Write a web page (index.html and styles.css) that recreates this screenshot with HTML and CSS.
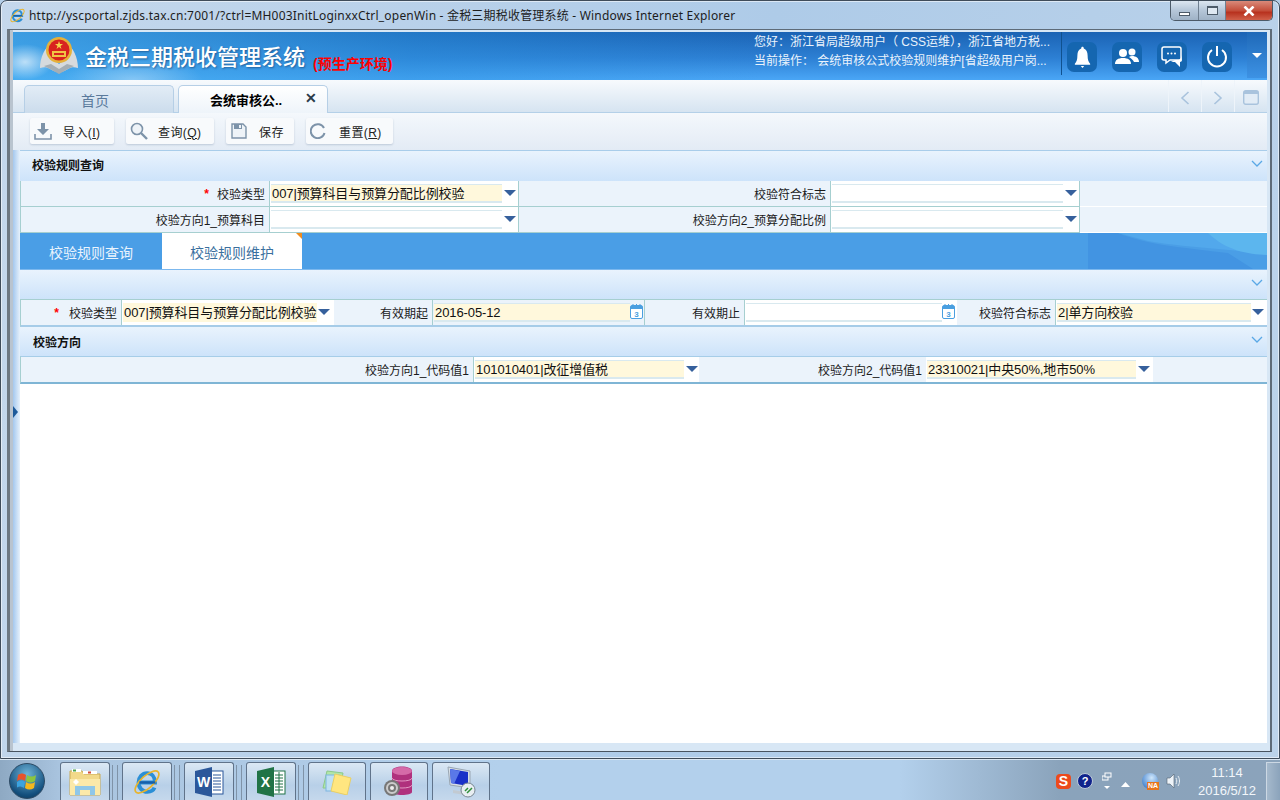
FILE: index.html
```html
<!DOCTYPE html>
<html lang="zh">
<head>
<meta charset="utf-8">
<title>金税三期税收管理系统</title>
<link rel="stylesheet" href="styles.css">
</head>
<body>
<svg class="defs" width="0" height="0">
  <symbol id="ie" viewBox="0 0 32 32">
    <path d="M7.500 16.500h17c0-6-3.500-10-8.500-10s-9 4.500-9 10 4 10 9.500 10c4 0 6.500-2 7.500-4.500" fill="none" stroke="#2b8fd6" stroke-width="4.200"/>
    <ellipse cx="16" cy="16" rx="16" ry="6.500" transform="rotate(-42 16 16)" fill="none" stroke="#e8b42c" stroke-width="1.800"/>
    <path d="M8 16.500h17" stroke="#175fa8" stroke-width="2.500"/>
  </symbol>
  <symbol id="arrow" viewBox="0 0 12 6">
    <path d="M0 0h12L6 6z" fill="#36609c"/>
  </symbol>
  <symbol id="chev" viewBox="0 0 12 7">
    <path d="M1 1l5 5 5-5" fill="none" stroke="#5aa8e6" stroke-width="1.300"/>
  </symbol>
</svg>

<div class="desktop">
  <div class="window">
    <div class="titlebar">
      <svg class="title-ie"><use href="#ie"/></svg>
      <span class="title-text">http://yscportal.zjds.tax.cn:7001/?ctrl=MH003InitLoginxxCtrl_openWin - 金税三期税收管理系统 - Windows Internet Explorer</span>
      <div class="win-ctrls">
        <div class="wc wc-min"><i></i></div>
        <div class="wc wc-max"><i></i></div>
        <div class="wc wc-close"><svg width="12" height="10" viewBox="0 0 12 10"><path d="M1.500 .5l9 9M10.500 .5l-9 9" stroke="#fff" stroke-width="2.600"/></svg></div>
      </div>
    </div>

    <div class="frame">
      <header class="app-head">
        <svg class="emblem" width="38" height="40" viewBox="0 0 38 40">
          <path d="M12 8C5 10 0 22 0 32c4-1 7-1 10 1 3 2 6 3 9 3s6-1 9-3c3-2 6-2 10-1 0-10-5-22-12-24 2 8 1 15-7 20-7-5-9-12-7-20z" fill="#d6dadd"/>
          <path d="M4 30l7-2 8 5 8-5 7 2-6 3-9 5-9-5z" fill="#a5aeb4"/>
          <circle cx="19" cy="14" r="13" fill="#e6b13a"/>
          <circle cx="19" cy="14" r="10.500" fill="#d8231f"/>
          <path d="M19 5l1 3h3l-2.500 2 1 3-2.500-2-2.500 2 1-3L15 8h3z" fill="#f5d44a"/>
          <rect x="12" y="15" width="14" height="6" fill="#f0c544"/>
          <rect x="14" y="17" width="10" height="2" fill="#d8231f"/>
        </svg>
        <div class="app-title">金税三期税收管理系统</div>
        <div class="app-env">(预生产环境)</div>
        <div class="user-info">
          <div>您好：浙江省局超级用户（ CSS运维），浙江省地方税...</div>
          <div>当前操作： 会统审核公式校验规则维护[省超级用户岗...</div>
        </div>
        <div class="head-btns">
          <div class="hbtn"><svg width="17" height="24" viewBox="0 0 20 26"><path d="M10 1c1 0 1.500.7 1.500 2 3 1 4.500 4 4.500 8 0 5 1 8 3 10v1H1v-1c2-2 3-5 3-10 0-4 1.500-7 4.500-8C8.500 1.700 9 1 10 1z" fill="#fff"/><path d="M8 23.500h4L10 26z" fill="#fff"/></svg></div>
          <div class="hbtn"><svg width="24" height="18" viewBox="0 0 24 18"><circle cx="8" cy="5" r="4" fill="#fff"/><path d="M0 16c0-4 3-6 8-6s8 2 8 6z" fill="#fff"/><circle cx="17" cy="4" r="3.500" fill="#fff"/><path d="M14 9c1-.5 2-1 3-1 4 0 7 2 7 6h-5c-1-2-3-4-5-5z" fill="#fff"/></svg></div>
          <div class="hbtn"><svg width="22" height="22" viewBox="0 0 22 22"><path d="M3 1h15a2 2 0 0 1 2 2v9a2 2 0 0 1-2 2H9l-4 3v-3H3a2 2 0 0 1-2-2V3a2 2 0 0 1 2-2z" fill="none" stroke="#fff" stroke-width="1.500"/><circle cx="7" cy="7.500" r="1" fill="#fff"/><circle cx="10.500" cy="7.500" r="1" fill="#fff"/><circle cx="14" cy="7.500" r="1" fill="#fff"/><path d="M21 9v5c0 1-1 2-2 2v5l-5-5H10l4-2h6z" fill="#fff"/></svg></div>
          <div class="hbtn"><svg width="22" height="22" viewBox="0 0 22 22"><path d="M6 4a9 9 0 1 0 10 0" fill="none" stroke="#fff" stroke-width="2"/><path d="M11 0v10" stroke="#fff" stroke-width="2"/></svg></div>
        </div>
        <div class="head-more"><svg width="10" height="5" viewBox="0 0 10 5"><path d="M0 0h10L5 5z" fill="#fff"/></svg></div>
      </header>

      <div class="app-body">
        <aside class="side-strip"><i class="side-tri"></i></aside>
        <main class="app-main">
          <div class="tabs-row">
            <div class="page-tab">首页</div>
            <div class="page-tab page-tab-on"><span>会统审核公..</span><b>✕</b></div>
            <div class="tab-tools">
              <div class="tt"><svg width="10" height="14" viewBox="0 0 10 14"><path d="M8.500 1L2 7l6.500 6" fill="none" stroke="#a9c3dd" stroke-width="1.600"/></svg></div>
              <div class="tt"><svg width="10" height="14" viewBox="0 0 10 14"><path d="M1.500 1L8 7l-6.500 6" fill="none" stroke="#a9c3dd" stroke-width="1.600"/></svg></div>
              <div class="tt"><svg width="16" height="15" viewBox="0 0 16 15"><rect x=".7" y=".7" width="14.600" height="13.600" rx="2" fill="#e2ecf6" stroke="#a9c3dd" stroke-width="1.400"/><rect x="1" y="1" width="14" height="3" fill="#a9c3dd"/></svg></div>
            </div>
          </div>

          <div class="toolbar">
            <div class="tbtn tb-import">
              <svg width="18" height="17" viewBox="0 0 18 17"><path d="M7 0h4v6h4L9 12 3 6h4z" fill="#7d93a9"/><path d="M1 11v5h16v-5" fill="none" stroke="#7d93a9" stroke-width="1.600"/></svg>
              <span>导入(<u>I</u>)</span>
            </div>
            <div class="tbtn tb-query">
              <svg width="18" height="18" viewBox="0 0 18 18"><circle cx="7" cy="7" r="5.500" fill="#eef3f8" stroke="#7d93a9" stroke-width="1.600"/><path d="M11 11l6 6" stroke="#7d93a9" stroke-width="2.400"/></svg>
              <span>查询(<u>Q</u>)</span>
            </div>
            <div class="tbtn tb-save">
              <svg width="16" height="16" viewBox="0 0 16 16"><path d="M1 1h11l3 3v11H1z" fill="#eef3f8" stroke="#7d93a9" stroke-width="1.400"/><rect x="3" y="1" width="8" height="5" fill="#7d93a9"/><rect x="8" y="2" width="2" height="3" fill="#eef3f8"/></svg>
              <span>保存</span>
            </div>
            <div class="tbtn tb-reset">
              <svg width="16" height="16" viewBox="0 0 16 16"><path d="M14 5a7 7 0 1 0 .5 5" fill="none" stroke="#7d93a9" stroke-width="2"/></svg>
              <span>重置(<u>R</u>)</span>
            </div>
          </div>

          <div class="sec-head sec-first"><span>校验规则查询</span><svg class="chev"><use href="#chev"/></svg></div>
          <div class="form form-q">
            <div class="lbl"><em>*</em>校验类型</div>
            <div class="fld"><span class="inp req inp-q">007|预算科目与预算分配比例校验</span><svg class="arr"><use href="#arrow"/></svg></div>
            <div class="lbl">校验符合标志</div>
            <div class="fld"><span class="inp inp-q"></span><svg class="arr"><use href="#arrow"/></svg></div>
            <div class="blank"></div>
            <div class="lbl">校验方向1_预算科目</div>
            <div class="fld"><span class="inp inp-q"></span><svg class="arr"><use href="#arrow"/></svg></div>
            <div class="lbl">校验方向2_预算分配比例</div>
            <div class="fld"><span class="inp inp-q"></span><svg class="arr"><use href="#arrow"/></svg></div>
            <div class="blank"></div>
          </div>

          <div class="blue-tabs">
            <div class="btab">校验规则查询</div>
            <div class="btab btab-on">校验规则维护</div>
            <svg class="blue-deco" width="179" height="36" viewBox="0 0 179 36">
              <path d="M0 0h179v36H0z" fill="#4a9ee6"/>
              <path d="M30 0C60 12 90 14 140 20l25 16H0V0z" fill="#4294e2"/>
              <path d="M30 0h150v22C150 16 90 14 60 8z" fill="#52a8ec"/>
              <path d="M120 0h59v22c-20-1-40-4-59-22z" fill="#5cb6ee"/>
            </svg>
          </div>

          <div class="sec-head sec-mid"><svg class="chev"><use href="#chev"/></svg></div>
          <div class="form form-m">
            <div class="lbl"><em class="em-m">*</em>校验类型</div>
            <div class="fld fld-m"><span class="inp req inp-tight">007|预算科目与预算分配比例校验</span><svg class="arr arr-m"><use href="#arrow"/></svg></div>
            <div class="lbl">有效期起</div>
            <div class="fld fld-d"><span class="inp req inp-d">2016-05-12</span><svg class="calico" viewBox="0 0 13 15"><rect x=".5" y="1.500" width="12" height="13" rx="1.500" fill="#fff" stroke="#4a9fe0"/><rect x="1" y="2" width="11" height="3" fill="#4a9fe0"/><path d="M3 0v3M6.500 0v3M10 0v3" stroke="#4a9fe0"/><text x="6.500" y="12.500" class="cal-num">3</text></svg></div>
            <div class="lbl">有效期止</div>
            <div class="fld fld-d fld-w"><span class="inp inp-d"></span><svg class="calico" viewBox="0 0 13 15"><rect x=".5" y="1.500" width="12" height="13" rx="1.500" fill="#fff" stroke="#4a9fe0"/><rect x="1" y="2" width="11" height="3" fill="#4a9fe0"/><path d="M3 0v3M6.500 0v3M10 0v3" stroke="#4a9fe0"/><text x="6.500" y="12.500" class="cal-num">3</text></svg></div>
            <div class="lbl">校验符合标志</div>
            <div class="fld fld-l"><span class="inp req inp-l">2|单方向校验</span><svg class="arr"><use href="#arrow"/></svg></div>
          </div>

          <div class="sec-head sec-dir"><span>校验方向</span><svg class="chev"><use href="#chev"/></svg></div>
          <div class="form form-d">
            <div class="lbl">校验方向1_代码值1</div>
            <div class="fld"><span class="inp req inp-c">101010401|改征增值税</span><svg class="arr"><use href="#arrow"/></svg></div>
            <div class="lbl">校验方向2_代码值1</div>
            <div class="fld"><span class="inp req inp-c">23310021|中央50%,地市50%</span><svg class="arr"><use href="#arrow"/></svg></div>
            <div class="blank"></div>
          </div>
          <div class="empty"></div>
        </main>
      </div>
    </div>
  </div>

  <footer class="taskbar">
    <div class="orb">
      <svg width="20" height="20" viewBox="0 0 20 20">
        <path d="M1 4c3-2 5-2 8 0l-1 6c-3-2-5-2-8 0z" fill="#e8532b"/>
        <path d="M10 4c3 2 6 2 9 0l-1 6c-3 2-6 2-9 0z" fill="#8cc63f"/>
        <path d="M0 11c3-2 5-2 8 0l-1 6c-3-2-5-2-8 0z" fill="#3ba3e0"/>
        <path d="M9 11c3 2 6 2 9 0l-1 6c-3 2-6 2-9 0z" fill="#f5b81e"/>
      </svg>
    </div>
    <div class="tk tk-a">
      <svg width="32" height="28" viewBox="0 0 32 28"><path d="M1 3h12l2 3h16v21H1z" fill="#f2d98a" stroke="#c9a955"/><rect x="3" y="1" width="9" height="3" fill="#fff"/><rect x="4" y="1.500" width="3" height="2" fill="#4ca64c"/><rect x="14" y="3" width="14" height="3" fill="#fff"/><rect x="19" y="3.500" width="3" height="2" fill="#d24a3a"/><path d="M1 11h30v16H1z" fill="#fbe9a9"/><path d="M6 27v-9h20v9h-5v-5H11v5z" fill="#8fc7e8"/><path d="M4 14l3 3 3-3-3-3z" fill="#fff"/></svg>
    </div>
    <div class="tk tk-a"><svg width="30" height="30"><use href="#ie"/></svg></div>
    <div class="tk tk-a">
      <svg width="30" height="30" viewBox="0 0 30 30"><rect x="17" y="4" width="12" height="23" fill="#fff" stroke="#2b579a"/><path d="M19 8h8M19 11h8M19 14h8M19 17h8M19 20h8M19 23h8" stroke="#2b579a"/><path d="M1 4L18 0v30L1 26z" fill="#2b579a"/><text x="9.500" y="20" class="ico-letter">W</text></svg>
    </div>
    <div class="tk tk-a">
      <svg width="30" height="30" viewBox="0 0 30 30"><rect x="17" y="4" width="12" height="23" fill="#fff" stroke="#217346"/><path d="M19 8h8M19 11h8M19 14h8M19 17h8M19 20h8M19 23h8M23 5v21" stroke="#217346"/><path d="M1 4L18 0v30L1 26z" fill="#217346"/><text x="9.500" y="20" class="ico-letter">X</text></svg>
    </div>
    <div class="tk tk-b tk-first">
      <svg width="32" height="26" viewBox="0 0 32 26"><path d="M5 1L21 3l-3 15H1z" fill="#b3e6a8" stroke="#8cc98a" transform="translate(1 1)"/><rect x="5" y="6" width="13" height="16" fill="#bfe0f4" stroke="#7fb6e0"/><path d="M14 5l16 4-4 17-16-4z" fill="#ffe680" stroke="#e8cf66"/></svg>
    </div>
    <div class="tk tk-b">
      <svg width="34" height="32" viewBox="0 0 34 32"><path d="M10 5c0-6 20-6 20 0v21c0 4-20 4-20 0z" fill="#b0317d"/><ellipse cx="20" cy="5" rx="10" ry="4" fill="#d56aa8"/><path d="M10 12c0 4 20 4 20 0M10 19c0 4 20 4 20 0" fill="none" stroke="#e39ac4"/><circle cx="10" cy="22" r="8" fill="#777"/><circle cx="10" cy="22" r="5" fill="none" stroke="#ccc" stroke-width="2"/><circle cx="10" cy="22" r="2" fill="#eee"/></svg>
    </div>
    <div class="tk tk-b">
      <svg width="32" height="32" viewBox="0 0 32 32"><path d="M3 1l22 4v17L5 19z" fill="#d7dee5" stroke="#9aa6b2"/><path d="M5 3l18 3v14L6 17z" fill="#1a30c8"/><path d="M5 3l10 2-6 13-3-1z" fill="#5a78e8"/><path d="M8 24l12 2v3L8 27z" fill="#c2cad2"/><circle cx="23" cy="24" r="7" fill="#e8eef2" stroke="#7a8792"/><path d="M20 25l3-3M22 27l5-5" stroke="#2f8f3a" stroke-width="1.500"/></svg>
    </div>

    <div class="tray">
      <div class="tray-s">S</div>
      <div class="tray-help">?</div>
      <div class="tray-lang"><svg width="10" height="18" viewBox="0 0 10 18"><rect x="0" y="4" width="6" height="4" fill="none" stroke="#fff"/><rect x="3" y="1" width="6" height="4" fill="#8ba3bb" stroke="#fff"/><path d="M2 14h6l-3 3z" fill="#fff"/></svg></div>
      <div class="tray-up"><svg width="9" height="5" viewBox="0 0 9 5"><path d="M0 5h9L4.500 0z" fill="#fff"/></svg></div>
      <div class="tray-na"><span>NA</span></div>
      <div class="tray-vol"><svg width="16" height="16" viewBox="0 0 16 16"><path d="M1 5h3l4-4v14l-4-4H1z" fill="#eef3f8" stroke="#52626f" stroke-width=".6"/><path d="M10 5c1 2 1 4 0 6M12 3c2 3 2 7 0 10" fill="none" stroke="#e8eef3"/></svg></div>
      <div class="clock"><div>11:14</div><div>2016/5/12</div></div>
      <div class="show-desk"></div>
    </div>
  </footer>
</div>
</body>
</html>
```
FILE: styles.css
```css
* { box-sizing: border-box; }
html, body { margin: 0; padding: 0; }
body {
  width: 1280px; height: 800px; overflow: hidden;
  font: 12px "Liberation Sans", "Noto Sans CJK SC", sans-serif;
  color: #111;
}
.defs { display: block; height: 0; }
.cal-num { font: bold 8px "Liberation Sans", sans-serif; fill: #4a9fe0; text-anchor: middle; }
.ico-letter { font: bold 14px "Liberation Sans", sans-serif; fill: #fff; text-anchor: middle; }

.desktop { width: 1280px; height: 800px; display: flex; flex-direction: column; background: #b4cfe9; }

.window {
  height: 759px; flex: none;
  display: flex; flex-direction: column;
  border: 1px solid #3f4c5a; border-radius: 7px 7px 0 0;
  background: linear-gradient(100deg, #c5d8ec 0%, #aecbe8 55%, #bcd3ea 100%);
  box-shadow: inset 0 0 0 1px rgba(255,255,255,.55);
}
.titlebar { height: 28px; flex: none; display: flex; align-items: center; padding-left: 8px; position: relative; }
.title-ie { width: 17px; height: 17px; flex: none; margin-top: 0; }
.title-text { margin-left: 3px; font: 12px "Noto Sans", "Noto Sans CJK SC", sans-serif; color: #1d1d1d; white-space: nowrap; letter-spacing: .2px; }
.win-ctrls {
  margin-left: auto; margin-right: 6px; align-self: flex-start; display: flex;
  height: 20px; border: 1px solid #4c5a68; border-top: none; border-radius: 0 0 5px 5px; overflow: hidden;
}
.wc { display: flex; align-items: center; justify-content: center; }
.wc-min, .wc-max { background: linear-gradient(#dce6f0, #b5c6d8 50%, #9fb2c6); border-right: 1px solid #6f7f90; }
.wc-min { width: 28px; }
.wc-min i { width: 11px; height: 4px; border: 1px solid #4d5b69; background: #fff; margin-top: 6px; }
.wc-max { width: 27px; }
.wc-max i { width: 11px; height: 9px; border: 1px solid #4d5b69; border-top-width: 2px; background: #dfe8f1; }
.wc-close { width: 46px; background: linear-gradient(#d98a7a, #c44f3b 50%, #b8321f 60%, #d0604a); }

.frame {
  height: 723px; flex: none;
  margin-left: 6px; margin-right: 7px;
  border-top: 1px solid #5e6b78; border-bottom: 1px solid #48535f;
  border-left: 3px solid #6d7882; border-right: 2px solid #5e6b78;
  padding: 2px 3px 8px 3px;
  background: linear-gradient(90deg, #b9c4cf 0, #b9c4cf 3px, #d8e7f5 3px);
  display: flex; flex-direction: column;
}

.app-head {
  height: 48px; flex: none; display: flex; align-items: center;
  background:
    radial-gradient(ellipse 28px 18px at 12px 30px, rgba(255,255,255,.65), rgba(255,255,255,0)),
    radial-gradient(ellipse 70px 22px at 120px 48px, rgba(255,255,255,.35), rgba(255,255,255,0)),
    linear-gradient(90deg, rgba(70,175,240,.75), rgba(45,150,225,.4) 400px, rgba(40,150,220,0) 750px),
    linear-gradient(#1b63b4, #2d80d4 55%, #4aa6f6);
}
.emblem { margin-left: 27px; flex: none; margin-top: 0; }
.app-title {
  margin-left: 7px; margin-top: 4px; font-size: 22px; line-height: 30px; color: #fff; font-weight: 500;
  text-shadow: 1px 1px 2px rgba(20,60,110,.6); white-space: nowrap;
}
.app-env { margin-left: 8px; margin-top: 13px; font-size: 14px; font-weight: bold; color: #f00; white-space: nowrap; }
.user-info { margin-left: auto; width: 307px; color: #eaf3fc; line-height: 19px; white-space: nowrap; padding-bottom: 9px; overflow: hidden; }
.head-btns {
  width: 186px; height: 43px; flex: none; align-self: flex-start;
  border-left: 1px solid #10518f; display: flex; gap: 15px; padding: 10px 0 0 5px;
}
.hbtn { width: 30px; height: 30px; border-radius: 7px; background: #1566b0; display: flex; align-items: center; justify-content: center; }
.head-more { width: 20px; height: 46px; flex: none; align-self: flex-start; background: linear-gradient(#1f69b8, #3d92e4); display: flex; align-items: center; justify-content: center; }

.app-body { flex: 1; display: flex; min-height: 0; }
.side-strip { width: 7px; flex: none; background: linear-gradient(90deg, #a4c8ee, #e6f1fb); display: flex; align-items: center; }
.side-tri { width: 0; height: 0; border-left: 5px solid #1d5a9a; border-top: 6px solid transparent; border-bottom: 6px solid transparent; }
.app-main { flex: 1; min-width: 0; display: flex; flex-direction: column; background: #fff; }

.tabs-row {
  height: 33px; flex: none; margin-left: -7px; display: flex; align-items: flex-end;
  padding-left: 11px; gap: 4px;
  background: linear-gradient(#f7fafd, #d6e4f1);
  border-bottom: 1px solid #b4d0e8;
}
.page-tab {
  width: 150px; height: 28px; margin-bottom: -1px;
  border: 1px solid #b6cfe6; border-bottom: none; border-radius: 5px 5px 0 0;
  background: linear-gradient(#e2ecf6, #cbdcec);
  display: flex; align-items: center; justify-content: center; padding-right: 8px;
  font-size: 14px; color: #5a7a9c;
}
.page-tab-on { background: linear-gradient(#ffffff, #eef4fa); justify-content: flex-start; padding: 0 0 0 31px; font-size: 13px; color: #000; font-weight: bold; position: relative; z-index: 1; }
.page-tab-on b { margin-left: 23px; margin-top: -3px; font-size: 14px; color: #2b3a4a; }
.tab-tools { margin-left: auto; display: flex; align-self: stretch; }
.tt { width: 33px; border-left: 1px solid #eef4fa; display: flex; align-items: center; justify-content: center; padding-top: 3px; }

.toolbar {
  height: 37px; flex: none; margin-left: -7px; display: flex; padding: 5px 0 0 17px; gap: 12px;
  background: linear-gradient(#f4f8fc, #e3ebf5);
}
.tbtn {
  height: 26px; display: flex; align-items: center; padding-left: 4px;
  background: #f8fafc; border-radius: 2px; box-shadow: 0 1px 2px rgba(130,150,175,.4);
  color: #222; white-space: nowrap;
}
.tbtn span { letter-spacing: .4px; }
.tbtn u { text-decoration: underline; }
.tb-import { width: 84px; } .tb-import span { margin-left: 11px; }
.tb-query { width: 88px; } .tb-query span { margin-left: 10px; }
.tb-save { width: 68px; } .tb-save svg { margin-left: 1px; } .tb-save span { margin-left: 12px; }
.tb-reset { width: 87px; } .tb-reset span { margin-left: 13px; }

.sec-head {
  flex: none; display: flex; align-items: center; justify-content: space-between;
  padding: 0 4px 0 12px;
  background: linear-gradient(#e9f3fd, #cde3fa);
  font-weight: bold; font-size: 12px; color: #111;
}
.sec-head span { margin-top: -3px; }
.sec-first { height: 31px; border-top: 1px solid #a9cdea; }
.sec-mid { height: 29px; justify-content: flex-end; }
.sec-dir { height: 29px; padding-left: 13px; }
.sec-dir span { margin-top: -1px; }
.chev { width: 12px; height: 7px; margin-top: -5px; }

.form { flex: none; display: grid; background: #ebf3fb; }
.lbl, .fld, .blank { height: 26px; border-bottom: 1px solid #a6cfd0; }
.lbl { border-right: 1px solid #a6cfd0; display: flex; align-items: center; justify-content: flex-end; padding-right: 4px; color: #1b1b1b; white-space: nowrap; }
.lbl em { color: #f00; font-style: normal; font-weight: bold; margin-right: 8px; }
.lbl em.em-m { margin-right: 10px; }
.fld { border-right: 1px solid #a6cfd0; background: #fff; display: flex; align-items: center; padding-left: 1px; }
.blank { border-bottom-color: #fff; }
.inp {
  display: block; height: 19px; line-height: 16px; padding: 1px 0 0 1px; font-size: 13px; letter-spacing: -.1px; color: #111;
  border-top: 1px solid #d9e9ef; border-bottom: 2px solid #d9e9ef; white-space: nowrap; overflow: hidden; background: #fff;
}
.req { background: #fff8dc; }
.arr { width: 12px; height: 6px; flex: none; margin-left: 2px; margin-top: -1px; }

.form-q { grid-template-columns: 249px 249px 312px 249px 1fr; border-left: 1px solid #a6cfd0; }
.form-q .inp-q { width: 231px; }
.form-m {
  grid-template-columns: 101px 212px 99px 212px 100px 212px 99px 1fr;
  border-left: 1px solid #a6cfd0; border-top: 1px solid #a6cfd0;
  border-bottom: 2px solid #a6cce8;
}
.form-m .lbl, .form-m .fld { height: 25px; border-bottom: none; }
.form-m .fld { padding-left: 1px; }
.inp-tight { width: 194px; border-color: transparent; letter-spacing: -.1px; }
.fld-m { border-right: none; }
.arr-m { margin-left: 1px; margin-right: 0; }
.inp-d { width: 196px; }
.fld-d { background: #ebf3fb; }
.fld-w { background: #fff; border-right: none; }
.calico { width: 13px; height: 15px; margin-left: 0; margin-top: -2px; flex: none; }
.inp-l { width: 194px; }
.fld-l { border-right: none; }
.fld-l .arr { margin-left: 1px; }

.form-d {
  grid-template-columns: 452px 226px 227px 227px 1fr;
  border-left: 1px solid #a6cfd0; border-top: 1px solid #a6cde8;
  border-bottom: 2px solid #7fb5d5;
}
.form-d .lbl, .form-d .fld, .form-d .blank { height: 25px; border-bottom: none; }
.form-d .fld { border-right: none; }
.form-d .fld:nth-child(2) { border-left: 1px solid #a6cfd0; }
.inp-c { width: 209px; }
.form-d .arr { margin-left: 2px; }
.form-d .lbl { border-right: none; }

.blue-tabs { height: 37px; flex: none; display: flex; background: #4a9ee6; border-bottom: 1px solid #7cb8ee; }
.btab { width: 142px; display: flex; align-items: center; justify-content: center; font-size: 14px; color: #eaf4fd; padding-top: 2px; }
.btab-on { width: 140px; background: #fff; color: #3a6f9e; position: relative; }
.btab-on::after { content: ""; position: absolute; top: 0; right: 0; border-top: 6px solid #f08c1e; border-left: 6px solid transparent; }
.blue-deco { margin-left: auto; display: block; flex: none; }

.empty { flex: 1; background: #fff; }

.taskbar {
  height: 41px; flex: none; display: flex; padding-top: 2px; align-items: stretch;
  background: linear-gradient(90deg, #8ea9c3 0, #a9c4df 60px, #b3d0ec 500px, #b3d0ec 900px, #8aa3bb 1060px, #8ba3bb 1280px);
  border-top: 1px solid #dbe7f3;
}
.orb {
  width: 36px; height: 36px; margin: 1px 15px 0 9px; flex: none; border-radius: 50%;
  background: radial-gradient(circle at 50% 30%, #6fb4d8, #14507e 70%, #0b3050);
  border: 1px solid #2c4a64; display: flex; align-items: center; justify-content: center;
}
.tk {
  width: 50px; flex: none; margin-right: 12px; position: relative;
  border: 1px solid #60738a; border-bottom: none; border-radius: 3px 3px 0 0;
  background: linear-gradient(#dbe8f4, #b8d0e8 60%, #c5d8ec);
  display: flex; align-items: center; justify-content: center;
}
.tk-a::after { content: ""; position: absolute; left: 51px; top: 2px; bottom: 0; width: 4px; border-left: 1px solid #7f93a8; border-right: 1px solid #7f93a8; }
.tk-b { width: 58px; margin-right: 4px; }
.tk-first { margin-left: 0; }

.tray { margin-left: auto; display: flex; align-items: center; position: relative; color: #fff; }
.tray-s { width: 15px; height: 15px; border-radius: 4px; background: #ec4a1c; color: #fff; font-weight: bold; font-size: 14px; line-height: 15px; text-align: center; margin-right: 6px; }
.tray-help { width: 16px; height: 16px; border-radius: 50%; background: #10238c; border: 1px solid #c0ccd8; color: #fff; font-weight: bold; font-size: 11px; line-height: 14px; text-align: center; margin-right: 9px; }
.tray-lang { width: 10px; height: 18px; margin-right: 9px; }
.tray-up { width: 9px; height: 10px; margin-right: 12px; }
.tray-na { width: 16px; height: 16px; border-radius: 50%; background: radial-gradient(circle at 60% 30%, #cfe6fa, #1f69c4); position: relative; margin-right: 8px; }
.tray-na span { position: absolute; right: -1px; bottom: -1px; background: #e8741a; color: #fff; font: bold 7px/8px "Liberation Sans", sans-serif; padding: 0 1px; }
.tray-vol { width: 16px; height: 16px; margin-right: 10px; }
.clock { width: 70px; text-align: center; color: #f2f6fa; line-height: 18px; font-size: 13px; padding-top: 1px; }
.show-desk { width: 14px; height: 39px; margin-left: 4px; background: linear-gradient(90deg, #a5b9cc, #8ba3bb); border-left: 1px solid #ccd8e4; border-top: 1px solid #ccd8e4; }
```
